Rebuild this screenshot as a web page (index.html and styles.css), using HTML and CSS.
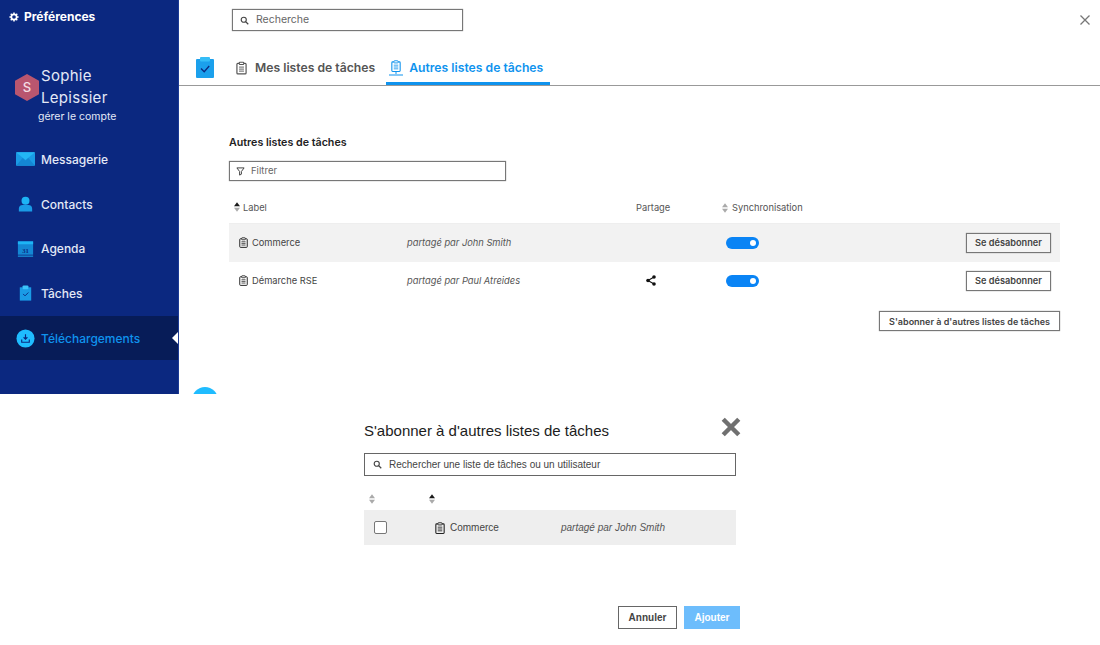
FILE: index.html
```html
<!DOCTYPE html>
<html lang="fr">
<head>
<meta charset="utf-8">
<title>Préférences</title>
<link rel="stylesheet" href="styles.css">
</head>
<body>
<svg class="defs" width="0" height="0" aria-hidden="true">
  <defs>
    <symbol id="clip" viewBox="0 0 12 14">
      <path d="M3.500 2H2a1 1 0 0 0-1 1v9.500a1 1 0 0 0 1 1h8a1 1 0 0 0 1-1V3a1 1 0 0 0-1-1H8.500" fill="none" stroke="currentColor" stroke-width="1.300"/>
      <rect x="3.600" y=".7" width="4.800" height="2.600" rx=".6" fill="none" stroke="currentColor" stroke-width="1.100"/>
      <path d="M3.300 6h5.400M3.300 8.200h5.400M3.300 10.400h5.400" stroke="currentColor" stroke-width="1"/>
    </symbol>
    <symbol id="search" viewBox="0 0 12 12">
      <circle cx="5" cy="5" r="3.400" fill="none" stroke="currentColor" stroke-width="1.500"/>
      <path d="M7.500 7.500L11 11" stroke="currentColor" stroke-width="1.700"/>
    </symbol>
    <symbol id="sort" viewBox="0 0 7 11">
      <path class="up" d="M3.500 0L7 4.700H0z"/>
      <path class="down" d="M3.500 11L0 6.300h7z"/>
    </symbol>
  </defs>
</svg>

<div class="app">
  <aside class="sidebar">
    <div class="prefs">
      <svg class="gear" viewBox="0 0 12 12"><circle cx="6" cy="6" r="3.200" fill="none" stroke="#fff" stroke-width="2"/><path d="M6 .5v2M6 9.500v2M.5 6h2M9.500 6h2M2.100 2.100l1.400 1.400M8.500 8.500l1.400 1.400M2.100 9.900l1.400-1.400M8.500 3.500l1.400-1.400" stroke="#fff" stroke-width="1.800"/></svg>
      <span>Préférences</span>
    </div>
    <div class="profile">
      <div class="profile-top">
        <svg class="hex" viewBox="0 0 24 27"><path d="M12 0l12 6.750v13.500L12 27 0 20.250V6.750z" fill="#b9566f"/><text x="12" y="18" text-anchor="middle" class="hex-letter">S</text></svg>
        <div class="name">Sophie<br>Lepissier</div>
      </div>
      <div class="manage">gérer le compte</div>
    </div>
    <nav class="nav">
      <a class="nav-item">
        <svg class="nav-icon" viewBox="0 0 20 14"><rect width="20" height="14" rx="1" fill="#1a9be6"/><path d="M0 0l10 8 10-8z" fill="#23b7f5"/><path d="M0 14l7-8 3 2.500L13 6l7 8z" fill="#1487d4"/></svg>
        <span>Messagerie</span>
      </a>
      <a class="nav-item">
        <svg class="nav-icon" viewBox="0 0 20 16"><circle cx="10" cy="4.500" r="4.200" fill="#1db4f5"/><path d="M3 16v-3a4 4 0 0 1 4-4h6a4 4 0 0 1 4 4v3z" fill="#1a9be6"/></svg>
        <span>Contacts</span>
      </a>
      <a class="nav-item">
        <svg class="nav-icon" viewBox="0 0 20 16"><rect x="2" width="16" height="14" fill="#1487d4"/><rect x="2" width="16" height="3" fill="#1db4f5"/><rect x="2" y="15" width="16" height="1" fill="#1db4f5"/><text x="10" y="12" text-anchor="middle" class="cal-num">31</text></svg>
        <span>Agenda</span>
      </a>
      <a class="nav-item">
        <svg class="nav-icon" viewBox="0 0 20 16"><rect x="4" y="2" width="12" height="14" fill="#1a9be6"/><rect x="7" width="6" height="4" rx="1" fill="#3cc4fa"/><path d="M7.500 9l2 2 3.500-3.500" fill="none" stroke="#0b2880" stroke-width="1"/></svg>
        <span>Tâches</span>
      </a>
      <a class="nav-item active">
        <svg class="nav-icon round" viewBox="0 0 20 20"><circle cx="10" cy="10" r="9.500" fill="#1fbcff"/><path d="M10 5.500v5M8 8.700l2 2 2-2" fill="none" stroke="#0b2880" stroke-width="1.200"/><path d="M6 11v3h8v-3" fill="none" stroke="#0b2880" stroke-width="1.200"/></svg>
        <span>Téléchargements</span>
      </a>
    </nav>
  </aside>

  <main class="main">
    <div class="topbar">
      <div class="field top-search">
        <svg class="field-icon"><use href="#search"/></svg>
        <span>Recherche</span>
      </div>
      <svg class="close" viewBox="0 0 10 10"><path d="M.5.500l9 9M9.500.500l-9 9" stroke="#777" stroke-width="1.300"/></svg>
    </div>
    <div class="tabs">
      <svg class="tabs-logo" viewBox="0 0 18 21"><rect y="2" width="18" height="19" rx="1" fill="#1ba0ec"/><rect x="4" width="10" height="4.500" rx="1" fill="#35bdf7"/><path d="M5 11.500l3.200 3.200 5-5.700" fill="none" stroke="#0b2880" stroke-width="1.300"/></svg>
      <a class="tab"><svg class="tab-icon"><use href="#clip"/></svg>Mes listes de tâches</a>
      <a class="tab tab-active">
        <svg class="tab-icon shared" viewBox="0 0 16 16"><use href="#clip" x="3" y="0" width="10" height="12"/><path d="M8 12v2M1 15h14" stroke="currentColor" stroke-width="1"/></svg>
        Autres listes de tâches
      </a>
    </div>
    <section class="content">
      <h2 class="section-title">Autres listes de tâches</h2>
      <div class="field filter">
        <svg class="field-icon" viewBox="0 0 10 10"><path d="M1 1h8L6 5v3L4 9V5z" fill="none" stroke="#444" stroke-width="1.100"/></svg>
        <span>Filtrer</span>
      </div>
      <div class="grid head">
        <div class="head-label"><svg class="sort on"><use href="#sort"/></svg>Label</div>
        <div></div>
        <div>Partage</div>
        <div class="head-sync"><svg class="sort off"><use href="#sort"/></svg>Synchronisation</div>
        <div></div>
      </div>
      <div class="grid row even">
        <div class="cell-label"><svg class="row-icon"><use href="#clip"/></svg>Commerce</div>
        <div class="shared-by">partagé par John Smith</div>
        <div></div>
        <div><span class="toggle"></span></div>
        <div class="cell-action"><button class="btn">Se désabonner</button></div>
      </div>
      <div class="grid row">
        <div class="cell-label"><svg class="row-icon"><use href="#clip"/></svg>Démarche RSE</div>
        <div class="shared-by">partagé par Paul Atreides</div>
        <div class="cell-share"><svg class="share" viewBox="0 0 10 11"><path d="M8 2L2 5.500 8 9" fill="none" stroke="#111" stroke-width="1.100"/><circle cx="8" cy="2" r="1.800" fill="#111"/><circle cx="2" cy="5.500" r="1.800" fill="#111"/><circle cx="8" cy="9" r="1.800" fill="#111"/></svg></div>
        <div><span class="toggle"></span></div>
        <div class="cell-action"><button class="btn">Se désabonner</button></div>
      </div>
      <div class="subscribe-row"><button class="btn btn-wide">S'abonner à d'autres listes de tâches</button></div>
    </section>
    <span class="peek"></span>
  </main>
</div>

<div class="dialog-area">
  <div class="dialog">
    <div class="dialog-head">
      <h2 class="dialog-title">S'abonner à d'autres listes de tâches</h2>
      <svg class="dialog-close" viewBox="0 0 18 18"><path d="M2 2l14 14M16 2L2 16" stroke="#707070" stroke-width="4"/></svg>
    </div>
    <div class="field dialog-search">
      <svg class="field-icon"><use href="#search"/></svg>
      <span>Rechercher une liste de tâches ou un utilisateur</span>
    </div>
    <div class="d-grid d-head">
      <div><svg class="sort off"><use href="#sort"/></svg></div>
      <div><svg class="sort on"><use href="#sort"/></svg></div>
    </div>
    <div class="d-grid d-row">
      <div><span class="checkbox"></span></div>
      <div class="d-label"><svg class="row-icon"><use href="#clip"/></svg>Commerce</div>
      <div class="d-shared">partagé par John Smith</div>
    </div>
    <div class="dialog-actions">
      <button class="d-btn cancel">Annuler</button>
      <button class="d-btn add">Ajouter</button>
    </div>
  </div>
</div>
</body>
</html>
```

FILE: styles.css
```css
* { box-sizing: border-box; }
html, body { margin: 0; padding: 0; }
body {
  width: 1100px;
  height: 645px;
  overflow: hidden;
  background: #fff;
  color: #444;
  font-family: Inter, "Open Sans", sans-serif;
}
.defs { position: absolute; }

/* Top application */
.app { display: flex; height: 394px; overflow: hidden; }
.sidebar { width: 178px; flex: none; background: #0b2880; color: #e4e9f6; }
.prefs {
  display: flex; align-items: center; gap: 5px;
  height: 33px; padding-left: 9px;
  font-size: 12px; font-weight: 700; color: #fff;
}
.gear { width: 10px; height: 10px; }
.profile { padding: 32px 0 0 15px; height: 104px; }
.profile-top { display: flex; align-items: center; gap: 2px; }
.hex { width: 24px; height: 27px; flex: none; }
.hex-letter { font: 500 13px Inter, sans-serif; fill: #f5dfe4; }
.name { font-size: 15px; line-height: 22px; font-weight: 400; letter-spacing: .3px; }
.manage { margin: 1px 0 0 23px; font-size: 10.500px; line-height: 13px; }
.nav { display: flex; flex-direction: column; }
.nav-item {
  position: relative;
  display: flex; align-items: center; gap: 6px;
  height: 44.700px; padding-left: 16px;
  font-size: 12px; font-weight: 500;
}
.nav-icon { width: 19px; height: 16px; flex: none; }
.nav-icon.round { height: 19px; }
.cal-num { font: 700 7px "Liberation Serif", serif; fill: #0b2880; }
.nav-item.active { background: #071c58; color: #0f93ee; }
.nav-item.active::after {
  content: ""; position: absolute; right: 0; top: 50%;
  margin-top: -6px;
  border: 6px solid transparent; border-right-color: #fff; border-left-width: 0;
}

.main { position: relative; flex: 1; min-width: 0; border-left: 1px solid #1c3a94; }
.topbar { display: flex; align-items: center; justify-content: space-between; height: 40px; padding: 0 10px 0 53px; }
.field {
  display: flex; align-items: center; gap: 8px;
  background: #fff; border: 1px solid #777; box-shadow: 0 0 1px #888;
  color: #666;
}
.top-search { width: 231px; height: 22px; padding-left: 7px; gap: 7px; font-size: 10.500px; line-height: 18px; }
.field-icon { width: 9px; height: 9px; flex: none; color: #444; }
.close { width: 10px; height: 10px; }
.tabs {
  display: flex; align-items: flex-end;
  height: 46px; padding-left: 17px;
  border-bottom: 1px solid #999;
}
.tabs-logo { width: 18px; height: 21px; margin: 0 22px 7px 0; flex: none; }
.tab {
  display: flex; align-items: center; gap: 8px;
  height: 35px; padding: 0 6px 0 0; margin-right: 5px;
  font-size: 12.200px; font-weight: 600; color: #555;
  white-space: nowrap;
}
.tab-icon { width: 11px; height: 14px; flex: none; }
.tab-icon.shared { width: 16px; height: 16px; }
.tab-active {
  margin: 0; padding: 3px 0 0 2px; width: 164px;
  color: #0f93ee; border-bottom: 3px solid #0f93ee;
  gap: 5px;
}
.content { padding: 50px 40px 0 50px; }
.section-title { margin: 0; font-size: 10.700px; font-weight: 600; line-height: 14px; color: #222; }
.filter { width: 277px; height: 20px; margin-top: 11px; padding-left: 6px; font-size: 9.500px; line-height: 16px; gap: 6px; }
.grid { display: grid; grid-template-columns: 178px 229px 87px 123px 1fr; align-items: center; }
.head { height: 42px; padding-top: 10px; font-size: 9.300px; color: #555; }
.head-label { display: flex; align-items: center; padding-left: 5px; }
.head-label .sort { margin-right: 3px; }
.head-sync { margin-left: -1px; }
.sort { width: 6px; height: 10px; margin-right: 4px; vertical-align: -2px; }
.up { fill: var(--sort-up); }
.down { fill: var(--sort-down); }
.on { --sort-up: #1a1a1a; --sort-down: #aaa; }
.off { --sort-up: #aaa; --sort-down: #aaa; }
.row { height: 38.500px; font-size: 9.300px; color: #444; }
.row.even { background: #f2f2f2; border-top: 1px solid #eee; }
.cell-label { display: flex; align-items: center; gap: 4px; padding-left: 10px; }
.row-icon { width: 9px; height: 11px; color: #222; flex: none; }
.shared-by { font-style: italic; color: #555; }
.cell-share { padding-left: 10px; }
.share { display: block; width: 10px; height: 11px; }
.toggle {
  position: relative; display: block;
  width: 33px; height: 12px; margin-left: 3px;
  border-radius: 6px; background: #0a84f5;
}
.toggle::after {
  content: ""; position: absolute; right: 3px; top: 3px;
  width: 6px; height: 6px; border-radius: 50%; background: #fff;
}
.cell-action { display: flex; justify-content: flex-end; padding-right: 9px; }
.btn {
  height: 20px; width: 85px; padding: 0;
  background: #fff; border: 1px solid #777; box-shadow: 0 0 1px #888;
  font: 600 9.200px Inter, sans-serif; color: #444;
}
.even .btn { background: #f4f4f4; }
.subscribe-row { display: flex; justify-content: flex-end; margin-top: 11px; }
.btn-wide { width: 181px; font-size: 9px; }
.peek {
  position: absolute; left: 13px; top: 387px;
  width: 26px; height: 26px; border-radius: 50%; background: #1fbcff;
}

/* Subscribe dialog */
.dialog-area { padding: 0 360px 0 364px; }
.dialog { width: 376px; }
.dialog-head { display: flex; justify-content: space-between; height: 59px; padding-top: 23px; }
.dialog-title { margin: 2px 0 0; font: 400 15px/24px "Liberation Sans", Arial, sans-serif; color: #1c1c1c; }
.dialog-close { width: 20px; height: 20px; margin: 0 -1px 0 0; flex: none; }
.dialog-search {
  width: 372px; height: 23px; padding-left: 8px; gap: 7px;
  font: 10px "Liberation Sans", Arial, sans-serif; color: #444;
  border-color: #666; box-shadow: none;
}
.d-grid { display: grid; grid-template-columns: 65px 132px 1fr; width: 372px; align-items: center; }
.d-grid.d-head { grid-template-columns: 60px 1fr; height: 34px; padding: 12px 0 0 5px; }
.d-head > div { display: flex; }
.d-row {
  height: 35px; background: #eee;
  font: 10px "Liberation Sans", Arial, sans-serif; color: #444;
}
.checkbox { display: block; width: 13px; height: 13px; margin-left: 10px; background: #fff; border: 1px solid #777; border-radius: 2px; }
.d-label { display: flex; align-items: center; gap: 5px; padding-left: 6px; }
.d-label .row-icon { width: 10px; height: 12px; }
.d-shared { font-style: italic; color: #555; }
.dialog-actions { display: flex; justify-content: flex-end; gap: 7px; margin: 61px 0 0 0; }
.d-btn {
  height: 23px; padding: 0;
  font: 700 10px "Liberation Sans", Arial, sans-serif;
}
.cancel { width: 59px; background: #fff; border: 1px solid #666; color: #444; }
.add { width: 56px; background: #6dbdfc; border: none; color: #fff; }
```
